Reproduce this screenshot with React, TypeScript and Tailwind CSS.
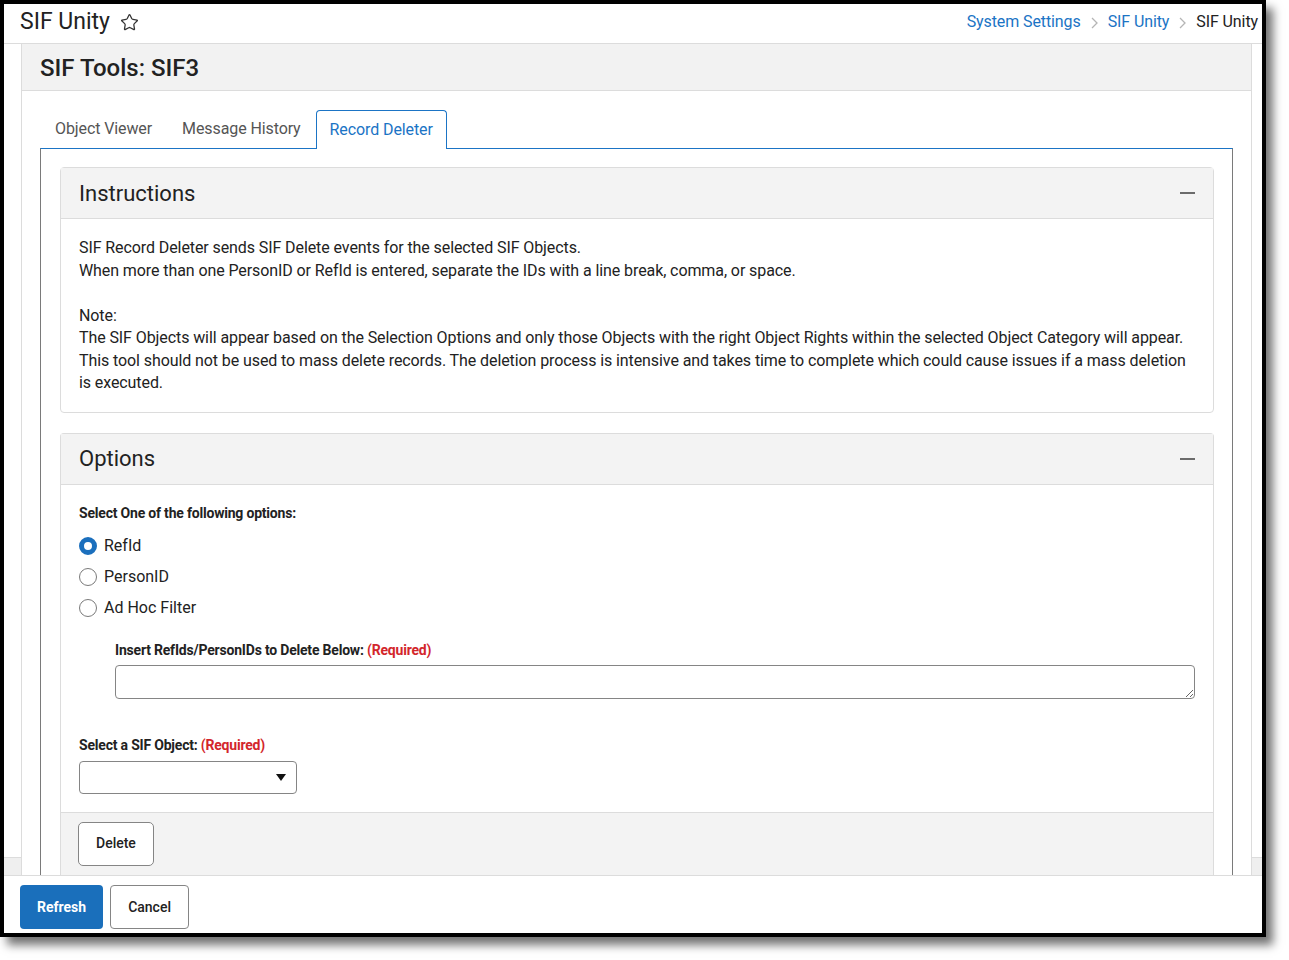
import { Star } from "lucide-react";

function Minus() {
  return <span className="block h-[2px] w-[15px] bg-[#6b6b6b]" />;
}

function Chevron() {
  return (
    <svg width="7" height="12" viewBox="0 0 7 12" className="mt-px">
      <path d="M1 1l5 5-5 5" fill="none" stroke="#b5b5b5" strokeWidth="1.3" />
    </svg>
  );
}

function CardHeader({ title }: { title: string }) {
  return (
    <div className="flex h-[51px] items-center justify-between border-b border-[#dcdcdc] bg-[#f3f3f3] px-[18px]">
      <h2 className="text-[22px] text-[#222]">{title}</h2>
      <Minus />
    </div>
  );
}

function Radio({ label, checked }: { label: string; checked?: boolean }) {
  return (
    <label className="flex h-[31px] items-center gap-[7px]">
      {checked ? (
        <span className="h-[18px] w-[18px] rounded-full border-[5px] border-[#1b6fbd] bg-white" />
      ) : (
        <span className="h-[18px] w-[18px] rounded-full border border-[#7a7a7a] bg-white" />
      )}
      <span className="text-[16px] text-[#222]">{label}</span>
    </label>
  );
}

function SideStrip({ w }: { w: string }) {
  return (
    <div className={`flex flex-col ${w}`}>
      <div className="flex-1 bg-white" />
      <div className="h-[18px] border-t border-[#dcdcdc] bg-[#efefef]" />
    </div>
  );
}

export default function App() {
  const tabs = ["Object Viewer", "Message History", "Record Deleter"];

  return (
    <div className="min-h-screen bg-white font-['Roboto',sans-serif]">
      <div className="flex h-[937px] w-[1266px] flex-col border-4 border-black bg-white shadow-[7px_8px_9px_rgba(0,0,0,0.55)]">
        {/* Top bar */}
        <div className="flex h-10 shrink-0 items-center justify-between border-b border-[#dcdcdc] pb-[3px] pl-4 pr-1">
          <div className="flex items-center gap-[10px]">
            <span className="text-[23px] text-[#222]">SIF Unity</span>
            <Star className="h-[19px] w-[19px] text-[#333]" strokeWidth={1.6} />
          </div>
          <div className="flex items-center gap-[10px] text-[16px] tracking-[-0.1px]">
            <span className="text-[#1b74c5]">System Settings</span>
            <Chevron />
            <span className="text-[#1b74c5]">SIF Unity</span>
            <Chevron />
            <span className="text-[#222]">SIF Unity</span>
          </div>
        </div>

        {/* Main */}
        <div className="flex min-h-0 flex-1">
          <SideStrip w="w-[17px]" />
          <div className="flex min-w-0 flex-1 flex-col overflow-hidden border-x border-[#dcdcdc]">
            <div className="flex h-[47px] shrink-0 items-center border-b border-[#dcdcdc] bg-[#f2f2f2] pl-[18px] pt-px">
              <h1 className="text-[24px] font-medium text-[#222]">SIF Tools: SIF3</h1>
            </div>

            <div className="flex flex-1 flex-col px-[18px] pt-[19px]">
              {/* Tabs */}
              <div className="flex tracking-[-0.1px]">
                {tabs.map((t) =>
                  t === "Record Deleter" ? (
                    <div
                      key={t}
                      className="relative -mb-px flex h-[39px] items-center rounded-t-[4px] border border-b-0 border-[#1b74c5] bg-white px-[13px] text-[16px] text-[#1b74c5]"
                    >
                      {t}
                    </div>
                  ) : (
                    <div key={t} className="flex h-[38px] items-center px-[15px] text-[16px] text-[#555]">
                      {t}
                    </div>
                  )
                )}
              </div>

              <div className="flex flex-1 flex-col gap-[20px] border-x border-t border-x-[#7a7a7a] border-t-[#1b74c5] pl-[19px] pr-[18px] pt-[18px]">
                {/* Instructions */}
                <div className="rounded-[4px] border border-[#dcdcdc]">
                  <CardHeader title="Instructions" />
                  <div className="px-[18px] pb-[17px] pt-[18px] text-[16px] leading-[22.5px] tracking-[-0.09px] text-[#222]">
                    <p>SIF Record Deleter sends SIF Delete events for the selected SIF Objects.</p>
                    <p>When more than one PersonID or RefId is entered, separate the IDs with a line break, comma, or space.</p>
                    <p className="mt-[22.5px]">Note:</p>
                    <p>
                      The SIF Objects will appear based on the Selection Options and only those Objects with the right Object
                      Rights within the selected Object Category will appear.
                    </p>
                    <p>
                      This tool should not be used to mass delete records. The deletion process is intensive and takes time to
                      complete which could cause issues if a mass deletion is executed.
                    </p>
                  </div>
                </div>

                {/* Options */}
                <div className="rounded-t-[4px] border border-b-0 border-[#dcdcdc]">
                  <CardHeader title="Options" />
                  <div className="px-[18px] pb-[18px] pt-[18px]">
                    <p className="text-[14px] font-bold leading-5 tracking-[-0.2px] text-[#222]">
                      Select One of the following options:
                    </p>
                    <div className="mt-[8px]">
                      <Radio label="RefId" checked />
                      <Radio label="PersonID" />
                      <Radio label="Ad Hoc Filter" />
                    </div>

                    <div className="ml-[36px] mt-[16px]">
                      <p className="text-[14px] font-bold leading-5 tracking-[-0.2px] text-[#222]">
                        Insert RefIds/PersonIDs to Delete Below: <span className="text-[#d3262b]">(Required)</span>
                      </p>
                      <textarea className="mt-[5px] block h-[34px] w-full rounded-[4px] border border-[#858585] bg-white" />
                    </div>

                    <p className="mt-[36px] text-[14px] font-bold leading-5 tracking-[-0.2px] text-[#222]">
                      Select a SIF Object: <span className="text-[#d3262b]">(Required)</span>
                    </p>
                    <div className="mt-[6px] flex h-[33px] w-[218px] items-center justify-end rounded-[4px] border border-[#858585] pr-[10px]">
                      <svg width="10" height="7" viewBox="0 0 10 7">
                        <path d="M0 0h10L5 7z" fill="#111" />
                      </svg>
                    </div>
                  </div>
                  <div className="h-[80px] border-t border-[#dcdcdc] bg-[#f3f3f3] pl-[17px] pt-[9px]">
                    <button className="h-[44px] rounded-[5px] border border-[#858585] bg-white px-[17px] text-[14px] font-medium text-[#222]">
                      Delete
                    </button>
                  </div>
                </div>
              </div>
            </div>
          </div>
          <SideStrip w="w-[10px]" />
        </div>

        {/* Footer */}
        <div className="flex h-[58px] shrink-0 items-start gap-[7px] border-t border-[#dcdcdc] bg-white pl-4 pt-[9px]">
          <button className="h-[44px] rounded-[4px] bg-[#1a6fbb] px-[17px] text-[14px] font-bold text-white">Refresh</button>
          <button className="h-[44px] rounded-[4px] border border-[#858585] bg-white px-[17px] text-[14px] font-medium text-[#222]">
            Cancel
          </button>
        </div>
      </div>
    </div>
  );
}
